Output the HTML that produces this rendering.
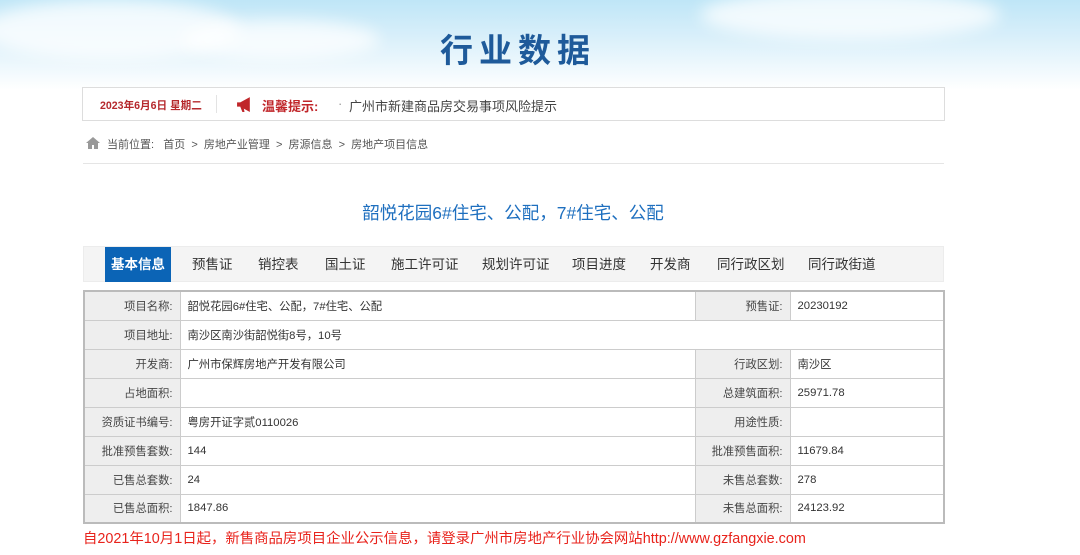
<!DOCTYPE html>
<html><head><meta charset="utf-8"><style>
*{margin:0;padding:0;box-sizing:border-box}
body{width:1080px;height:555px;overflow:hidden;background:#fff;font-family:"Liberation Sans","Noto Sans CJK SC",sans-serif;position:relative}
.sky{position:absolute;left:0;top:0;width:1080px;height:90px;background:linear-gradient(180deg,#bfe6f7 0%,#d8effa 40%,#fff 100%)}
.cl{position:absolute;border-radius:50%;background:rgba(255,255,255,.75);filter:blur(8px)}
.title{position:absolute;top:24px;left:0;width:1036px;text-align:center;font-size:33px;font-weight:bold;color:#1e5a9a;letter-spacing:6px}
.bar{position:absolute;left:82px;top:87px;width:863px;height:34px;border:1px solid #ddd;background:#fff;font-size:13px}
.abs{position:absolute;white-space:nowrap}
.bc{font-size:11px;color:#555;top:136px}
.line{position:absolute;left:83px;top:163px;width:861px;height:1px;background:#e5e5e5}
.ptitle{position:absolute;top:200px;left:0;width:1026px;text-align:center;font-size:17.5px;color:#1e6fbf}
.tabs{position:absolute;left:83px;top:246px;width:861px;height:36px;background:#f4f4f4;border:1px solid #ececec}
.tab{position:absolute;top:0;height:36px;line-height:36px;font-size:13.5px;color:#333}
.act{background:#0b64b6;color:#fff;font-weight:bold;left:21px;width:66px;text-align:center;top:0;height:35px}
table{position:absolute;left:83px;top:290px;width:862px;border-collapse:collapse;border:2px solid #bbb;font-size:11.3px;color:#333}
td{height:29px;border:1px solid #ccc;padding:0 7px}
td.l{background:#eee;text-align:right;width:96px;color:#444}
td.l2{background:#eee;text-align:right;width:95px;color:#444}
td.v2{width:154px}
.foot{position:absolute;left:83px;top:527px;font-size:14.4px;color:#e8231c;white-space:nowrap}
</style></head><body>
<div class="sky"></div>
<div class="cl" style="left:-20px;top:0;width:260px;height:60px"></div>
<div class="cl" style="left:180px;top:20px;width:200px;height:40px"></div>
<div class="cl" style="left:700px;top:-10px;width:300px;height:50px"></div>
<div class="title">行业数据</div>
<div class="bar">
<span class="abs" style="left:17px;top:10px;color:#b5282c;font-weight:bold;font-size:10.6px">2023年6月6日 星期二</span>
<span class="abs" style="left:133px;top:7px;width:1px;height:18px;background:#e3e3e3"></span>
<svg class="abs" style="left:153px;top:8px" width="17" height="17" viewBox="0 0 16 16"><path d="M1 6h3l9-5v14l-9-5H1z" fill="#c0262a"/><path d="M4 10l2 5h2l-1-5z" fill="#c0262a"/></svg>
<span class="abs" style="left:179px;top:8px;color:#c0262a;font-weight:bold;font-size:13px">温馨提示:</span>
<span class="abs" style="left:255px;top:8px;color:#999">·</span>
<span class="abs" style="left:266px;top:8px;color:#444;font-size:13px">广州市新建商品房交易事项风险提示</span>
</div>
<svg class="abs" style="left:86px;top:137px" width="14" height="12" viewBox="0 0 14 12"><path d="M7 0L0 6h2v6h4V8h2v4h4V6h2z" fill="#999"/></svg>
<span class="abs bc" style="left:107px">当前位置:&nbsp;&nbsp; 首页 &nbsp;&gt;&nbsp; 房地产业管理 &nbsp;&gt;&nbsp; 房源信息 &nbsp;&gt;&nbsp; 房地产项目信息</span>
<div class="line"></div>
<div class="ptitle">韶悦花园6#住宅、公配，7#住宅、公配</div>
<div class="tabs">
<div class="tab act">基本信息</div>
<div class="tab" style="left:108px">预售证</div>
<div class="tab" style="left:174px">销控表</div>
<div class="tab" style="left:241px">国土证</div>
<div class="tab" style="left:307px">施工许可证</div>
<div class="tab" style="left:398px">规划许可证</div>
<div class="tab" style="left:488px">项目进度</div>
<div class="tab" style="left:566px">开发商</div>
<div class="tab" style="left:633px">同行政区划</div>
<div class="tab" style="left:724px">同行政街道</div>
</div>
<table>
<tr><td class="l">项目名称:</td><td>韶悦花园6#住宅、公配，7#住宅、公配</td><td class="l2">预售证:</td><td class="v2">20230192</td></tr>
<tr><td class="l">项目地址:</td><td colspan="3">南沙区南沙街韶悦街8号，10号</td></tr>
<tr><td class="l">开发商:</td><td>广州市保辉房地产开发有限公司</td><td class="l2">行政区划:</td><td class="v2">南沙区</td></tr>
<tr><td class="l">占地面积:</td><td></td><td class="l2">总建筑面积:</td><td class="v2">25971.78</td></tr>
<tr><td class="l">资质证书编号:</td><td>粤房开证字贰0110026</td><td class="l2">用途性质:</td><td class="v2"></td></tr>
<tr><td class="l">批准预售套数:</td><td>144</td><td class="l2">批准预售面积:</td><td class="v2">11679.84</td></tr>
<tr><td class="l">已售总套数:</td><td>24</td><td class="l2">未售总套数:</td><td class="v2">278</td></tr>
<tr><td class="l">已售总面积:</td><td>1847.86</td><td class="l2">未售总面积:</td><td class="v2">24123.92</td></tr>
</table>
<div class="foot">自2021年10月1日起，新售商品房项目企业公示信息，请登录广州市房地产行业协会网站http://www.gzfangxie.com</div>
</body></html>
